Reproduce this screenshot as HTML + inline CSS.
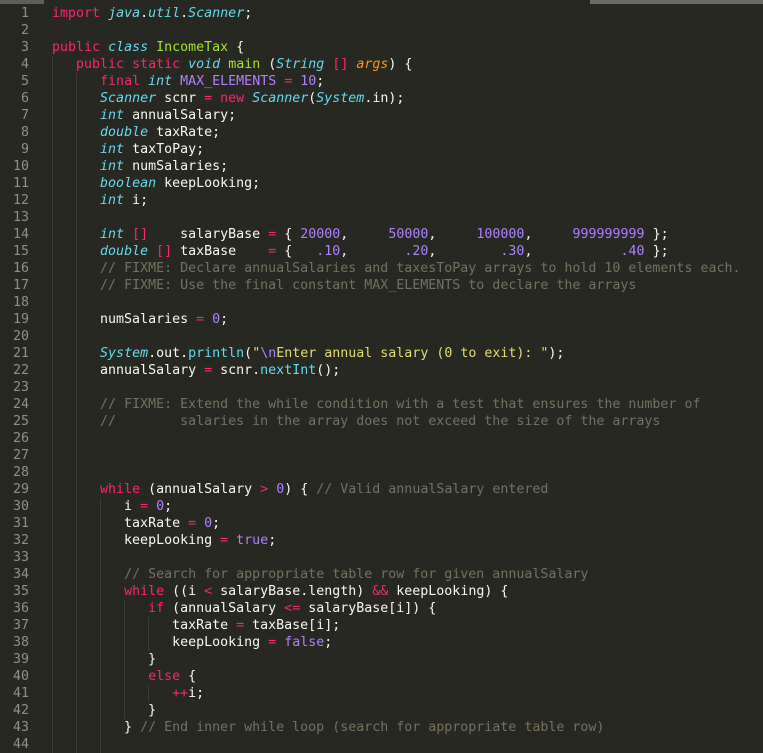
<!DOCTYPE html>
<html><head><meta charset="utf-8"><style>
html,body{margin:0;padding:0;background:#272822;width:763px;height:747px;overflow:hidden}
.top1{position:absolute;left:0;top:0;width:44px;height:4px;background:#5e5f59}
.top2{position:absolute;left:590px;top:0;width:173px;height:4px;background:#6b6b65}
#code{position:absolute;left:0;top:5px;font-family:"DejaVu Sans Mono","Liberation Mono",monospace;font-size:13.3px;line-height:17px;color:#f8f8f2}
.l{position:relative;height:17px}
.n{position:absolute;left:0;width:29px;text-align:right;color:#90908a}
.c0{position:absolute;left:52px;white-space:pre}
.g{position:absolute;left:52px;top:0;height:17px;background-image:repeating-linear-gradient(to right,#3b3c36 0 1px,transparent 1px 24px)}
.k{color:#f92672}.t{color:#66d9ef;font-style:italic}.f{color:#66d9ef}.c{color:#75715e}.nm{color:#ae81ff}.s{color:#e6db74}.gr{color:#a6e22e}.a{color:#fd971f;font-style:italic}
</style></head><body>
<div class="top1"></div><div class="top2"></div>
<div id="code">
<div class="l"><span class="n">1</span><span class="c0"><span class="k">import</span> <span class="t">java</span>.<span class="t">util</span>.<span class="t">Scanner</span>;</span></div>
<div class="l"><span class="n">2</span></div>
<div class="l"><span class="n">3</span><span class="c0"><span class="k">public</span> <span class="t">class</span> <span class="gr">IncomeTax</span> {</span></div>
<div class="l"><span class="n">4</span><span class="g" style="width:24px"></span><span class="c0">   <span class="k">public</span> <span class="k">static</span> <span class="t">void</span> <span class="gr">main</span> (<span class="t">String</span> <span class="k">[]</span> <span class="a">args</span>) {</span></div>
<div class="l"><span class="n">5</span><span class="g" style="width:48px"></span><span class="c0">      <span class="k">final</span> <span class="t">int</span> <span class="nm">MAX_ELEMENTS</span> <span class="k">=</span> <span class="nm">10</span>;</span></div>
<div class="l"><span class="n">6</span><span class="g" style="width:48px"></span><span class="c0">      <span class="t">Scanner</span> scnr <span class="k">=</span> <span class="k">new</span> <span class="t">Scanner</span>(<span class="t">System</span>.in);</span></div>
<div class="l"><span class="n">7</span><span class="g" style="width:48px"></span><span class="c0">      <span class="t">int</span> annualSalary;</span></div>
<div class="l"><span class="n">8</span><span class="g" style="width:48px"></span><span class="c0">      <span class="t">double</span> taxRate;</span></div>
<div class="l"><span class="n">9</span><span class="g" style="width:48px"></span><span class="c0">      <span class="t">int</span> taxToPay;</span></div>
<div class="l"><span class="n">10</span><span class="g" style="width:48px"></span><span class="c0">      <span class="t">int</span> numSalaries;</span></div>
<div class="l"><span class="n">11</span><span class="g" style="width:48px"></span><span class="c0">      <span class="t">boolean</span> keepLooking;</span></div>
<div class="l"><span class="n">12</span><span class="g" style="width:48px"></span><span class="c0">      <span class="t">int</span> i;</span></div>
<div class="l"><span class="n">13</span><span class="g" style="width:48px"></span></div>
<div class="l"><span class="n">14</span><span class="g" style="width:48px"></span><span class="c0">      <span class="t">int</span> <span class="k">[]</span>    salaryBase <span class="k">=</span> { <span class="nm">20000</span>,     <span class="nm">50000</span>,     <span class="nm">100000</span>,     <span class="nm">999999999</span> };</span></div>
<div class="l"><span class="n">15</span><span class="g" style="width:48px"></span><span class="c0">      <span class="t">double</span> <span class="k">[]</span> taxBase    <span class="k">=</span> {   <span class="nm">.10</span>,       <span class="nm">.20</span>,        <span class="nm">.30</span>,           <span class="nm">.40</span> };</span></div>
<div class="l"><span class="n">16</span><span class="g" style="width:48px"></span><span class="c0">      <span class="c">// FIXME: Declare annualSalaries and taxesToPay arrays to hold 10 elements each.</span></span></div>
<div class="l"><span class="n">17</span><span class="g" style="width:48px"></span><span class="c0">      <span class="c">// FIXME: Use the final constant MAX_ELEMENTS to declare the arrays</span></span></div>
<div class="l"><span class="n">18</span><span class="g" style="width:48px"></span></div>
<div class="l"><span class="n">19</span><span class="g" style="width:48px"></span><span class="c0">      numSalaries <span class="k">=</span> <span class="nm">0</span>;</span></div>
<div class="l"><span class="n">20</span><span class="g" style="width:48px"></span></div>
<div class="l"><span class="n">21</span><span class="g" style="width:48px"></span><span class="c0">      <span class="t">System</span>.out.<span class="f">println</span>(<span class="s">"</span><span class="nm">\n</span><span class="s">Enter annual salary (0 to exit): "</span>);</span></div>
<div class="l"><span class="n">22</span><span class="g" style="width:48px"></span><span class="c0">      annualSalary <span class="k">=</span> scnr.<span class="f">nextInt</span>();</span></div>
<div class="l"><span class="n">23</span><span class="g" style="width:48px"></span></div>
<div class="l"><span class="n">24</span><span class="g" style="width:48px"></span><span class="c0">      <span class="c">// FIXME: Extend the while condition with a test that ensures the number of</span></span></div>
<div class="l"><span class="n">25</span><span class="g" style="width:48px"></span><span class="c0">      <span class="c">//        salaries in the array does not exceed the size of the arrays</span></span></div>
<div class="l"><span class="n">26</span><span class="g" style="width:48px"></span></div>
<div class="l"><span class="n">27</span><span class="g" style="width:48px"></span></div>
<div class="l"><span class="n">28</span><span class="g" style="width:48px"></span></div>
<div class="l"><span class="n">29</span><span class="g" style="width:48px"></span><span class="c0">      <span class="k">while</span> (annualSalary <span class="k">&gt;</span> <span class="nm">0</span>) { <span class="c">// Valid annualSalary entered</span></span></div>
<div class="l"><span class="n">30</span><span class="g" style="width:72px"></span><span class="c0">         i <span class="k">=</span> <span class="nm">0</span>;</span></div>
<div class="l"><span class="n">31</span><span class="g" style="width:72px"></span><span class="c0">         taxRate <span class="k">=</span> <span class="nm">0</span>;</span></div>
<div class="l"><span class="n">32</span><span class="g" style="width:72px"></span><span class="c0">         keepLooking <span class="k">=</span> <span class="nm">true</span>;</span></div>
<div class="l"><span class="n">33</span><span class="g" style="width:72px"></span></div>
<div class="l"><span class="n">34</span><span class="g" style="width:72px"></span><span class="c0">         <span class="c">// Search for appropriate table row for given annualSalary</span></span></div>
<div class="l"><span class="n">35</span><span class="g" style="width:72px"></span><span class="c0">         <span class="k">while</span> ((i <span class="k">&lt;</span> salaryBase.length) <span class="k">&amp;&amp;</span> keepLooking) {</span></div>
<div class="l"><span class="n">36</span><span class="g" style="width:96px"></span><span class="c0">            <span class="k">if</span> (annualSalary <span class="k">&lt;=</span> salaryBase[i]) {</span></div>
<div class="l"><span class="n">37</span><span class="g" style="width:120px"></span><span class="c0">               taxRate <span class="k">=</span> taxBase[i];</span></div>
<div class="l"><span class="n">38</span><span class="g" style="width:120px"></span><span class="c0">               keepLooking <span class="k">=</span> <span class="nm">false</span>;</span></div>
<div class="l"><span class="n">39</span><span class="g" style="width:96px"></span><span class="c0">            }</span></div>
<div class="l"><span class="n">40</span><span class="g" style="width:96px"></span><span class="c0">            <span class="k">else</span> {</span></div>
<div class="l"><span class="n">41</span><span class="g" style="width:120px"></span><span class="c0">               <span class="k">++</span>i;</span></div>
<div class="l"><span class="n">42</span><span class="g" style="width:96px"></span><span class="c0">            }</span></div>
<div class="l"><span class="n">43</span><span class="g" style="width:72px"></span><span class="c0">         } <span class="c">// End inner while loop (search for appropriate table row)</span></span></div>
<div class="l"><span class="n">44</span><span class="g" style="width:72px"></span></div>
</div>
</body></html>
